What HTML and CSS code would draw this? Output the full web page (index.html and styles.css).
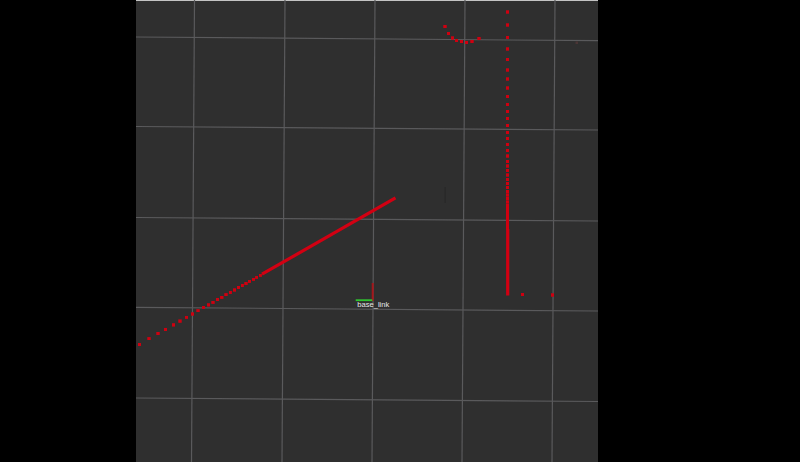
FILE: index.html
```html
<!DOCTYPE html>
<html>
<head>
<meta charset="utf-8">
<title>3D View</title>
<link rel="stylesheet" href="styles.css">
</head>
<body>
<div class="screen">
  <div class="side"></div>
  <div class="view">
    <svg class="scene" width="462" height="462" viewBox="136 0 462 462" xmlns="http://www.w3.org/2000/svg">
      <defs>
        <marker id="dot" viewBox="0 0 3.4 3.4" refX="1.7" refY="1.7" markerWidth="3.4" markerHeight="3.4" markerUnits="userSpaceOnUse">
          <rect width="3.4" height="3.4" fill="#cf0010"/>
        </marker>
      </defs>
      <rect class="topline" x="136" y="0" width="462" height="1"/>
      <g class="grid">
        <line x1="194.5" y1="0" x2="191.5" y2="462"/>
        <line x1="285" y1="0" x2="282" y2="462"/>
        <line x1="375" y1="0" x2="372" y2="462"/>
        <line x1="465" y1="0" x2="462" y2="462"/>
        <line x1="555" y1="0" x2="552" y2="462"/>
        <line x1="136" y1="37" x2="598" y2="40.7"/>
        <line x1="136" y1="126.5" x2="598" y2="130"/>
        <line x1="136" y1="217.5" x2="598" y2="221"/>
        <line x1="136" y1="307.3" x2="598" y2="311"/>
        <line x1="136" y1="398" x2="598" y2="401.5"/>
      </g>
      <rect class="faint" x="444.5" y="187" width="1.5" height="16"/>
      <rect class="faintdot" x="575.5" y="41.5" width="2.5" height="2.5"/>
      <g class="scan">
        <polyline points="445,26.7 448.3,33.3 452.7,38 456.7,40.3 461.7,41.7 466.7,42.3 472,41.3 479,38.7"/>
        <polyline points="507.7,12 507.7,25 507.7,37.3 507.7,49 507.7,59.7 507.7,70 507.7,79 507.7,88 507.7,96.3 507.7,104.3 507.7,111.7 507.7,118.7 507.7,125.3 507.7,132.3 507.7,138.7 507.7,144.7 507.7,150.3 507.7,156 507.7,161.3 507.7,166 507.7,170.5 507.7,175 507.7,179.3 507.7,183.5 507.7,187.5 507.7,191.3 507.7,195 507.7,198.5 507.7,202 507.7,205.3 507.7,208.5 507.7,211.5 507.7,214.5 507.7,217.3 507.7,220 507.7,222.7 507.7,225.3 507.7,227.8"/>
        <polyline points="139.3,344.4 149,338.8 158,333.7 165.7,329.3 173.3,324.9 180,321.1 186.7,317.2 192.3,314 198,310.8 203.7,307.5 208.3,304.9 213,302.2 217.3,299.7 221.8,297.2 226,294.8 230.2,292.4 234.3,290 238.3,287.7 242.2,285.5 246,283.3 249.7,281.2 253.3,279.2 256.8,277.2 260.2,275.2"/>
        <polyline points="522.3,294.7 552.7,295"/>
      </g>
      <line class="solid" x1="507.7" y1="229" x2="507.7" y2="295.5"/>
      <line class="solid" x1="262" y1="274.2" x2="395.5" y2="197.9"/>
      <rect class="axis-z" x="371.7" y="283" width="2" height="18"/>
      <rect class="axis-x" x="355.7" y="299.3" width="16.6" height="1.8"/>
      <text class="frame" x="357.3" y="306.5" textLength="32" lengthAdjust="spacingAndGlyphs">base_link</text>
    </svg>
  </div>
</div>
</body>
</html>
```
FILE: styles.css
```css
html, body {
  margin: 0;
  padding: 0;
  background: #000;
}

.screen {
  display: flex;
  width: 800px;
  height: 462px;
  background: #000;
  overflow: hidden;
}

.side {
  width: 136px;
  flex: none;
}

.view {
  width: 462px;
  height: 462px;
  flex: none;
  background: #2f2f2f;
}

.scene {
  display: block;
}

.topline {
  fill: #c4c4c4;
}

.grid line {
  stroke: #5a5a5c;
  stroke-width: 1.2;
}

.faint {
  fill: #292929;
}

.faintdot {
  fill: #4a3535;
}

.scan polyline {
  fill: none;
  stroke: none;
  marker-start: url(#dot);
  marker-mid: url(#dot);
  marker-end: url(#dot);
}

.solid {
  stroke: #d20012;
  stroke-width: 3.2;
}

.axis-z {
  fill: #a3161a;
}

.axis-x {
  fill: #2fc42f;
}

.frame {
  font-family: "Liberation Sans", Arial, sans-serif;
  font-size: 7.5px;
  fill: #e6e6e6;
}
```
